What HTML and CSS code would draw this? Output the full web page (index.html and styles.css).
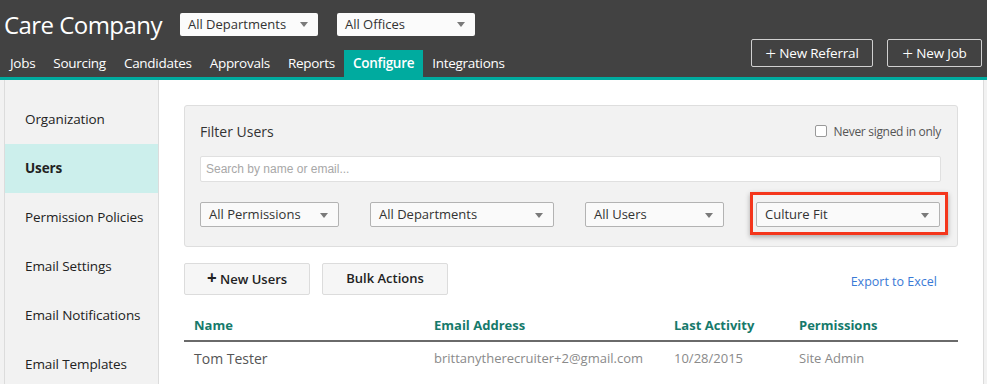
FILE: index.html
```html
<!DOCTYPE html>
<html lang="en">
<head>
  <meta charset="UTF-8" />
  <title>Care Company - Users</title>
  <link rel="stylesheet" href="styles.css">
</head>
<body>
  <header class="topbar">
    <div class="topbar-left">
      <div class="brand-row">
        <div class="brand">Care Company</div>
        <div class="select dark-select">All Departments</div>
        <div class="select dark-select">All Offices</div>
      </div>
      <nav class="tabs">
        <a href="#" class="tab">Jobs</a>
        <a href="#" class="tab">Sourcing</a>
        <a href="#" class="tab">Candidates</a>
        <a href="#" class="tab">Approvals</a>
        <a href="#" class="tab">Reports</a>
        <a href="#" class="tab active">Configure</a>
        <a href="#" class="tab">Integrations</a>
      </nav>
    </div>
    <div class="topbar-actions">
      <a href="#" class="outline-btn referral-btn"><span class="plus">+</span> New Referral</a>
      <a href="#" class="outline-btn job-btn"><span class="plus">+</span> New Job</a>
    </div>
  </header>

  <div class="page">
    <aside class="sidebar">
      <a href="#" class="side-item">Organization</a>
      <a href="#" class="side-item active">Users</a>
      <a href="#" class="side-item">Permission Policies</a>
      <a href="#" class="side-item">Email Settings</a>
      <a href="#" class="side-item">Email Notifications</a>
      <a href="#" class="side-item">Email Templates</a>
    </aside>

    <main class="content">
      <section class="filter-panel">
        <div class="filter-head">
          <span class="filter-title">Filter Users</span>
          <label class="check-label"><span class="checkbox"></span>Never signed in only</label>
        </div>
        <div class="search-box">Search by name or email...</div>
        <div class="filter-row">
          <div class="select narrow">All Permissions</div>
          <div class="select wide">All Departments</div>
          <div class="select narrow">All Users</div>
          <div class="select wide highlighted">Culture Fit</div>
        </div>
      </section>

      <div class="actions-row">
        <a href="#" class="action-btn"><span class="bold-plus">+</span> New Users</a>
        <a href="#" class="action-btn">Bulk Actions</a>
        <a href="#" class="export-link">Export to Excel</a>
      </div>

      <table class="users-table">
        <thead>
          <tr>
            <th class="col-name">Name</th>
            <th class="col-email">Email Address</th>
            <th class="col-activity">Last Activity</th>
            <th>Permissions</th>
          </tr>
        </thead>
        <tbody>
          <tr>
            <td class="user-name">Tom Tester</td>
            <td>brittanytherecruiter+2@gmail.com</td>
            <td>10/28/2015</td>
            <td>Site Admin</td>
          </tr>
        </tbody>
      </table>
    </main>
  </div>
</body>
</html>
```

FILE: styles.css
```css
* {
  margin: 0;
  padding: 0;
  box-sizing: border-box;
}

body {
  font-family: 'Open Sans', 'DejaVu Sans', sans-serif;
  background: #f2f2f2;
  color: #333;
  overflow: hidden;
}

a {
  text-decoration: none;
  color: inherit;
}

/* Top header */
.topbar {
  background: #424242;
  height: 80px;
  border-bottom: 3px solid #00ab9f;
  display: flex;
  justify-content: space-between;
  align-items: flex-end;
}

.brand-row {
  height: 50px;
  display: flex;
  align-items: center;
  padding-left: 4px;
  padding-bottom: 2px;
}

.brand {
  color: white;
  font-size: 24px;
  letter-spacing: -0.55px;
  margin-right: 18px;
}

.select {
  position: relative;
  height: 25px;
  line-height: 23px;
  background: #fafafa;
  border: 1px solid #b3b3b3;
  border-radius: 2px;
  font-size: 13px;
  color: #333;
  padding-left: 8px;
}

.select::after {
  content: "";
  position: absolute;
  right: 10px;
  top: 10px;
  border-left: 4px solid transparent;
  border-right: 4px solid transparent;
  border-top: 5px solid #7a7a7a;
}

.dark-select {
  width: 138px;
  height: 23px;
  line-height: 22px;
  border: none;
  background: #fbfbfb;
  margin-right: 19px;
}

.dark-select::after {
  top: 9px;
}

.tabs {
  display: flex;
  height: 27px;
  padding-left: 1px;
}

.tab {
  color: white;
  font-size: 13.5px;
  line-height: 27px;
  padding: 0 9px;
  letter-spacing: -0.28px;
}

.tab.active {
  background: #00ab9f;
  font-weight: 600;
}

.topbar-actions {
  display: flex;
  gap: 14px;
  padding-right: 5px;
  padding-bottom: 10px;
}

.outline-btn {
  height: 28px;
  border: 1px solid #d0d0d0;
  border-radius: 2px;
  color: white;
  font-size: 13.5px;
  line-height: 26px;
  text-align: center;
  letter-spacing: -0.2px;
}

.outline-btn .plus {
  font-size: 19px;
  font-weight: 300;
  vertical-align: -2px;
}

.referral-btn {
  width: 122px;
}

.job-btn {
  width: 95px;
}

/* Page body */
.page {
  display: flex;
  margin: 0 3px 0 4px;
  border-left: 1px solid #dcdcdc;
  border-right: 1px solid #dcdcdc;
  height: 304px;
}

.sidebar {
  width: 154px;
  background: #f2f2f2;
  border-right: 1px solid #dcdcdc;
  padding-top: 15px;
  display: flex;
  flex-direction: column;
}

.side-item {
  height: 49px;
  line-height: 49px;
  padding-left: 20px;
  font-size: 13.5px;
  letter-spacing: -0.1px;
  color: #222;
  flex-shrink: 0;
}

.side-item.active {
  background: #ccefec;
  font-weight: 700;
}

.content {
  flex: 1;
  background: white;
  padding: 25px 25px 0 25px;
}

/* Filter panel */
.filter-panel {
  background: #f2f2f2;
  border: 1px solid #dedede;
  border-radius: 3px;
  padding: 14px 16px 19px 15px;
}

.filter-head {
  display: flex;
  justify-content: space-between;
  align-items: center;
  height: 22px;
}

.filter-title {
  font-size: 14px;
  color: #333;
}

.check-label {
  display: flex;
  align-items: center;
  font-size: 12px;
  letter-spacing: -0.3px;
  color: #555;
}

.checkbox {
  width: 12px;
  height: 12px;
  border: 1px solid #999;
  border-radius: 2px;
  background: white;
  margin-right: 7px;
}

.search-box {
  margin-top: 14px;
  height: 26px;
  line-height: 24px;
  background: white;
  border: 1px solid #e0e0e0;
  border-radius: 2px;
  padding-left: 5px;
  font-family: 'Liberation Sans', Arial, sans-serif;
  font-size: 12px;
  color: #a8a8a8;
}

.filter-row {
  display: flex;
  gap: 31px;
  margin-top: 20px;
}

.select.narrow {
  width: 139px;
}

.select.wide {
  width: 184px;
}

.highlighted {
  margin-left: 1px;
}

.highlighted::before {
  content: "";
  position: absolute;
  left: -7px;
  right: -9px;
  top: -11px;
  bottom: -9px;
  border: 3px solid #f4361c;
  box-shadow: 0 2px 5px rgba(0, 0, 0, 0.3);
}

/* Actions */
.actions-row {
  display: flex;
  align-items: center;
  gap: 12px;
  margin-top: 16px;
}

.action-btn {
  width: 126px;
  height: 32px;
  line-height: 28px;
  text-align: center;
  background: #f6f6f6;
  border: 1px solid #dcdcdc;
  border-radius: 2px;
  font-size: 13px;
  font-weight: 600;
  color: #222;
}

.bold-plus {
  font-size: 17px;
  font-weight: 700;
}

.export-link {
  margin-left: auto;
  margin-right: 21px;
  margin-top: 5px;
  font-size: 12.5px;
  color: #3a7ad6;
}

/* Users table */
.users-table {
  width: 100%;
  border-collapse: collapse;
  margin-top: 21px;
  text-align: left;
}

.users-table th {
  font-size: 13px;
  font-weight: 700;
  color: #167a6b;
  padding: 0 10px 6px 10px;
  border-bottom: 2px solid #6a6a6a;
  height: 24px;
}

.users-table td {
  padding: 0 10px;
  height: 33px;
  font-size: 13px;
  color: #8a8a8a;
}

.users-table td.user-name {
  font-size: 14px;
  color: #555;
}

.col-name,
.col-email {
  width: 240px;
}

.col-activity {
  width: 125px;
}
```
